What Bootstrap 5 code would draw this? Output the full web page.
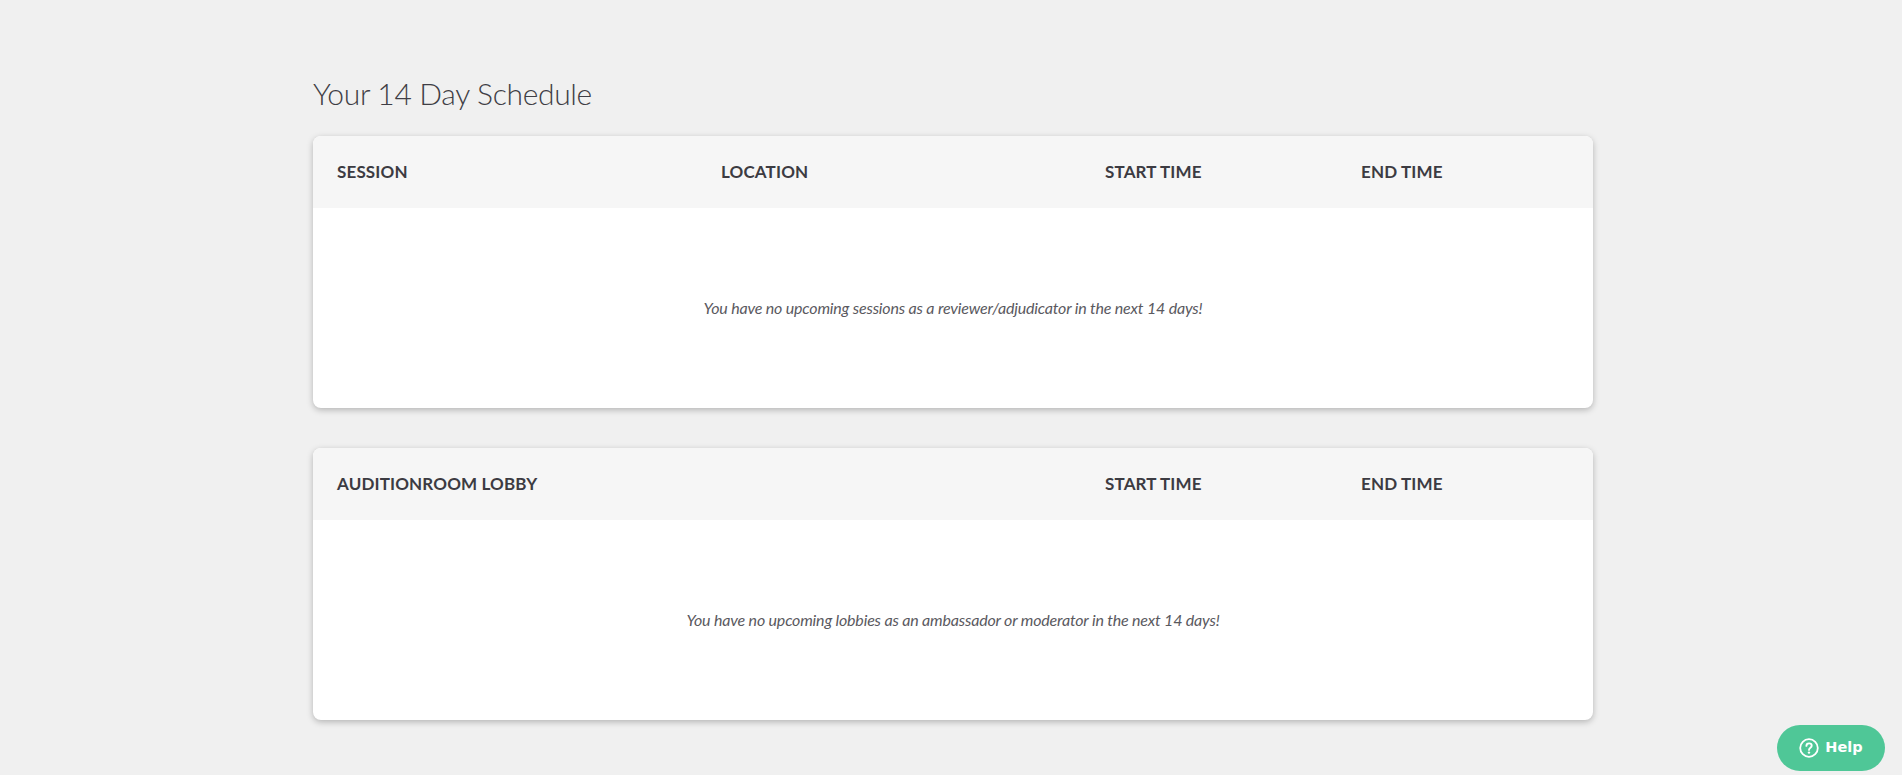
<!DOCTYPE html>
<html lang="en">
<head>
<meta charset="utf-8">
<title>Your 14 Day Schedule</title>
<link href="https://cdn.jsdelivr.net/npm/bootstrap@5.3.0/dist/css/bootstrap.min.css" rel="stylesheet">
<style>
html, body { height: 100%; }
body { background: #f0f0f0; font-family: Lato, "Liberation Sans", sans-serif; color: #46454c; overflow: hidden; padding-left: 4px; }
.page-wrap { width: 1280px; margin: 0 auto; padding-top: 73px; }
.page-title { font-family: Lato, sans-serif; font-weight: 300; font-size: 30px; letter-spacing: -.33px; line-height: 40px; margin: 0 0 23px; color: #3f3e45; }
.sched-card { border: 0; border-radius: 8px; background: #fff; box-shadow: 0 2px 6px rgba(0,0,0,.25); margin-bottom: 40px; overflow: hidden; }
.sched-head { height: 72px; background: #f6f6f6; padding: 0 24px; font-size: 17px; font-weight: 700; letter-spacing: .15px; text-transform: uppercase; color: #3c3b42; }
.col-wide { width: 384px; flex: none; }
.col-narrow { width: 256px; flex: none; }
.col-span { width: 768px; flex: none; }
.sched-empty { height: 200px; font-size: 16px; letter-spacing: -.18px; font-style: italic; color: #5a5960; }
.help-btn { position: fixed; right: 17px; bottom: 4px; width: 108px; height: 46px; border-radius: 23px; background: #4fc797; color: #fff; border: 0; font-family: "DejaVu Sans", sans-serif; font-size: 14.5px; font-weight: 700; gap: 6px; }
</style>
</head>
<body>
<div class="page-wrap">
  <h1 class="page-title">Your 14 Day Schedule</h1>
  <section class="card sched-card">
    <div class="sched-head d-flex align-items-center">
      <div class="col-wide">Session</div>
      <div class="col-wide">Location</div>
      <div class="col-narrow">Start Time</div>
      <div class="col-narrow">End Time</div>
    </div>
    <div class="sched-empty d-flex align-items-center justify-content-center">You have no upcoming sessions as a reviewer/adjudicator in the next 14 days!</div>
  </section>
  <section class="card sched-card">
    <div class="sched-head d-flex align-items-center">
      <div class="col-span">AuditionRoom Lobby</div>
      <div class="col-narrow">Start Time</div>
      <div class="col-narrow">End Time</div>
    </div>
    <div class="sched-empty d-flex align-items-center justify-content-center">You have no upcoming lobbies as an ambassador or moderator in the next 14 days!</div>
  </section>
</div>
<button type="button" class="btn help-btn d-flex align-items-center justify-content-center">
  <svg width="20" height="20" viewBox="0 0 20 20" fill="none" aria-hidden="true"><circle cx="10" cy="10" r="8.8" stroke="#fff" stroke-width="1.8"/><path d="M7.4 7.9c0-1.5 1.2-2.5 2.7-2.5s2.6 1 2.6 2.3c0 2-2.7 2-2.7 4.2" stroke="#fff" stroke-width="1.9" stroke-linecap="round"/><circle cx="10" cy="14.6" r="1.2" fill="#fff"/></svg>
  <span>Help</span>
</button>
<script src="https://cdn.jsdelivr.net/npm/bootstrap@5.3.0/dist/js/bootstrap.bundle.min.js"></script>
</body>
</html>
